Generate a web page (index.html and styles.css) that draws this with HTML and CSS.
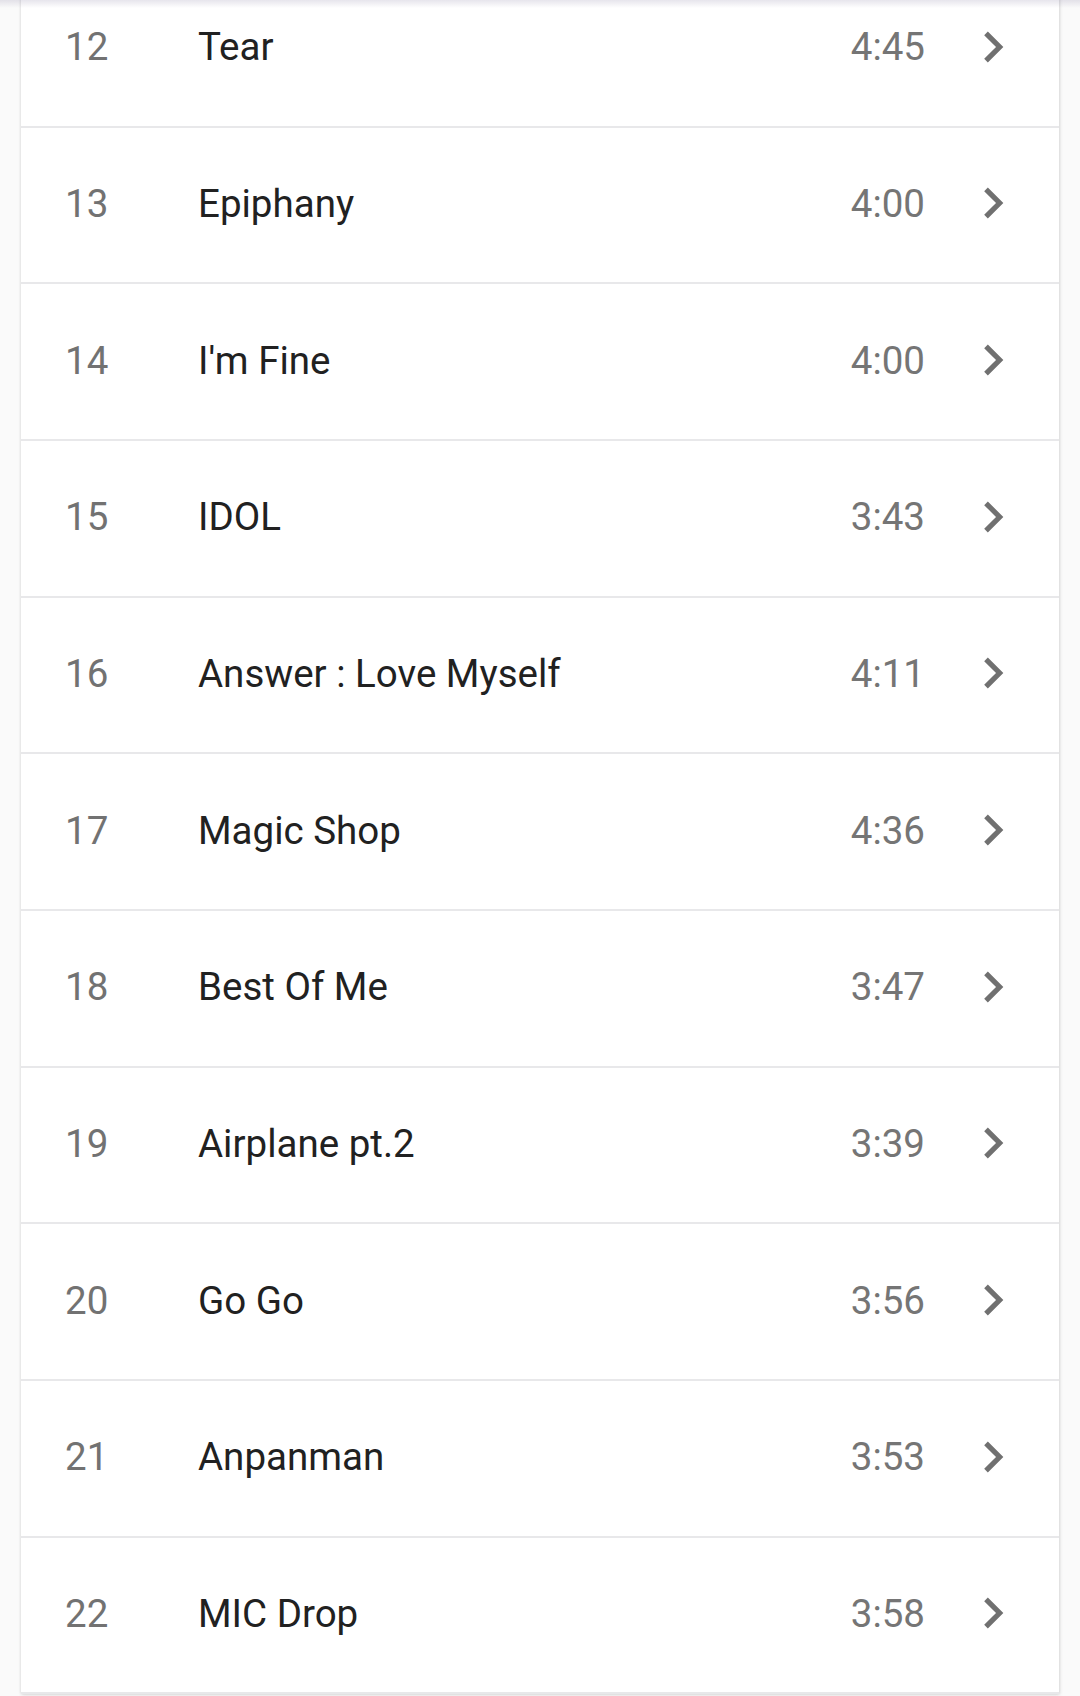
FILE: index.html
```html
<!DOCTYPE html>
<html lang="en">
<head>
  <meta charset="UTF-8" />
  <meta name="viewport" content="width=device-width, initial-scale=1.0"/>
  <title>Tracklist</title>
  <link rel="stylesheet" href="styles.css">
</head>
<body>
  <div class="appbar-shadow"></div>
  <div class="card">
    <ul class="tracks" id="tracks">
      <!-- filas generadas abajo -->
    </ul>
  </div>

  <script>
    const tracks = [
      [12, 'Tear', '4:45'],
      [13, 'Epiphany', '4:00'],
      [14, "I'm Fine", '4:00'],
      [15, 'IDOL', '3:43'],
      [16, 'Answer : Love Myself', '4:11'],
      [17, 'Magic Shop', '4:36'],
      [18, 'Best Of Me', '3:47'],
      [19, 'Airplane pt.2', '3:39'],
      [20, 'Go Go', '3:56'],
      [21, 'Anpanman', '3:53'],
      [22, 'MIC Drop', '3:58']
    ];

    const list = document.getElementById('tracks');
    tracks.forEach(([num, title, time]) => {
      const li = document.createElement('li');
      li.className = 'track';
      li.innerHTML = `
        <span class="num">${num}</span>
        <span class="title">${title}</span>
        <span class="time">${time}</span>
        <svg class="chevron" viewBox="0 0 24 24"><path d="M10 6L8.59 7.41 13.17 12l-4.58 4.59L10 18l6-6z"/></svg>
      `;
      list.appendChild(li);
    });
  </script>
</body>
</html>
```

FILE: styles.css
```css
* {
  margin: 0;
  padding: 0;
  box-sizing: border-box;
}
body {
  font-family: Roboto, 'Noto Sans', sans-serif;
  background: #fafafa;
  overflow: hidden;
  height: 1696px;
}
.appbar-shadow {
  position: absolute;
  top: 0;
  left: 0;
  right: 0;
  height: 8px;
  background: linear-gradient(rgba(120,110,150,0.18), rgba(120,110,150,0));
  z-index: 2;
}
.card {
  margin: -29px 21px 0 21px;
  background: white;
  box-shadow: 0 0 3px rgba(0,0,0,0.14), 1px 1px 4px rgba(0,0,0,0.08);
}
.tracks {
  list-style: none;
}
.track {
  display: flex;
  align-items: center;
  height: 156.67px;
  padding: 0 35px 3px 0;
  border-bottom: 2px solid #e8e8ea;
}
.num {
  width: 177px;
  padding-left: 44px;
  font-size: 38.5px;
  color: #727272;
}
.title {
  flex: 1;
  font-size: 38.5px;
  color: #212121;
}
.time {
  font-size: 38.5px;
  color: #757575;
  margin-right: 37px;
}
.chevron {
  width: 62px;
  height: 62px;
  fill: #707070;
}
```
